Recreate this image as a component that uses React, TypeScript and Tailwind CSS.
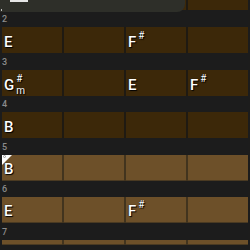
type Chord = { root: string; sharp?: boolean; minor?: boolean } | null;

interface Row {
  n: number;
  tone: "dark" | "light";
  chords: Chord[];
  mark?: boolean;
}

const rows: Row[] = [
  { n: 2, tone: "dark", chords: [{ root: "E" }, null, { root: "F", sharp: true }, null] },
  { n: 3, tone: "dark", chords: [{ root: "G", sharp: true, minor: true }, null, { root: "E" }, { root: "F", sharp: true }] },
  { n: 4, tone: "dark", chords: [{ root: "B" }, null, null, null] },
  { n: 5, tone: "light", chords: [{ root: "B" }, null, null, null], mark: true },
  { n: 6, tone: "light", chords: [{ root: "E" }, null, { root: "F", sharp: true }, null] },
];

const tones = {
  dark: { row: "bg-[#1f1a12]", cell: "bg-[#3c2809]" },
  light: { row: "bg-[#42341e]", cell: "bg-[#6d5029] border-b border-[#4a3a22]" },
};

const shadow = "[text-shadow:1px_1px_1px_#000,0_0_1px_#000]";

function ChordLabel({ chord }: { chord: Chord }) {
  if (!chord) return null;
  return (
    <div className="flex items-end text-white">
      <span className={`text-[15px] font-medium leading-none ${shadow}`}>{chord.root}</span>
      {(chord.sharp || chord.minor) && (
        <span className="flex flex-col ml-[2px] mb-[-1px]">
          <span className={`text-[10px] leading-none h-[12px] ${shadow}`}>{chord.sharp ? "#" : ""}</span>
          <span className={`text-[10px] leading-none h-[8px] ${shadow}`}>{chord.minor ? "m" : ""}</span>
        </span>
      )}
    </div>
  );
}

function Cells({ tone, chords, height, mark }: { tone: "dark" | "light"; chords: Chord[]; height: string; mark?: boolean }) {
  const t = tones[tone];
  return (
    <div className={`mx-[2px] w-[246px] flex gap-[2px] ${t.row}`}>
      {chords.map((c, i) => (
        <div key={i} className={`relative flex-1 ${height} ${t.cell} flex items-end pl-[2px] pb-[3px] overflow-hidden`}>
          {mark && i === 0 && (
            <div className="absolute left-0 top-0 w-0 h-0 border-t-[10px] border-r-[10px] border-t-white border-r-transparent">
              <span className="absolute -top-[10px] left-[1px] w-[3px] h-[3px] rounded-full border border-[#999]"></span>
            </div>
          )}
          <ChordLabel chord={c} />
        </div>
      ))}
    </div>
  );
}

export default function App() {
  return (
    <div className="relative w-[250px] h-[250px] overflow-hidden bg-[#1c1c1c] font-['Roboto','Liberation_Sans',sans-serif]">
      <Cells tone="dark" chords={[null, null, null, null]} height="h-[10.4px]" />
      {rows.map((r) => (
        <div key={r.n}>
          <div className="h-[16.6px] flex items-end pl-[2px] pb-[3px]">
            <span className="text-[9px] font-medium leading-none text-[#8c8c8c]">{r.n}</span>
          </div>
          <Cells tone={r.tone} chords={r.chords} height="h-[26px]" mark={r.mark} />
        </div>
      ))}
      <div className="h-[16.6px] flex items-end pl-[2px] pb-[3px]">
        <span className="text-[9px] font-medium leading-none text-[#8c8c8c]">7</span>
      </div>
      <Cells tone="light" chords={[null, null, null, null]} height="h-[5px]" />

      {/* toolbar over the first row */}
      <div className="absolute left-0 top-0 w-[185px] h-[12px] bg-[#2e2f29] rounded-br-[8px]">
        <div className="ml-[10px] w-[18px] h-[2px] bg-[#e6e6e6]"></div>
        <div className="absolute left-[1px] top-[9px] w-[1px] h-[2px] bg-[#bbb]"></div>
      </div>
    </div>
  );
}
